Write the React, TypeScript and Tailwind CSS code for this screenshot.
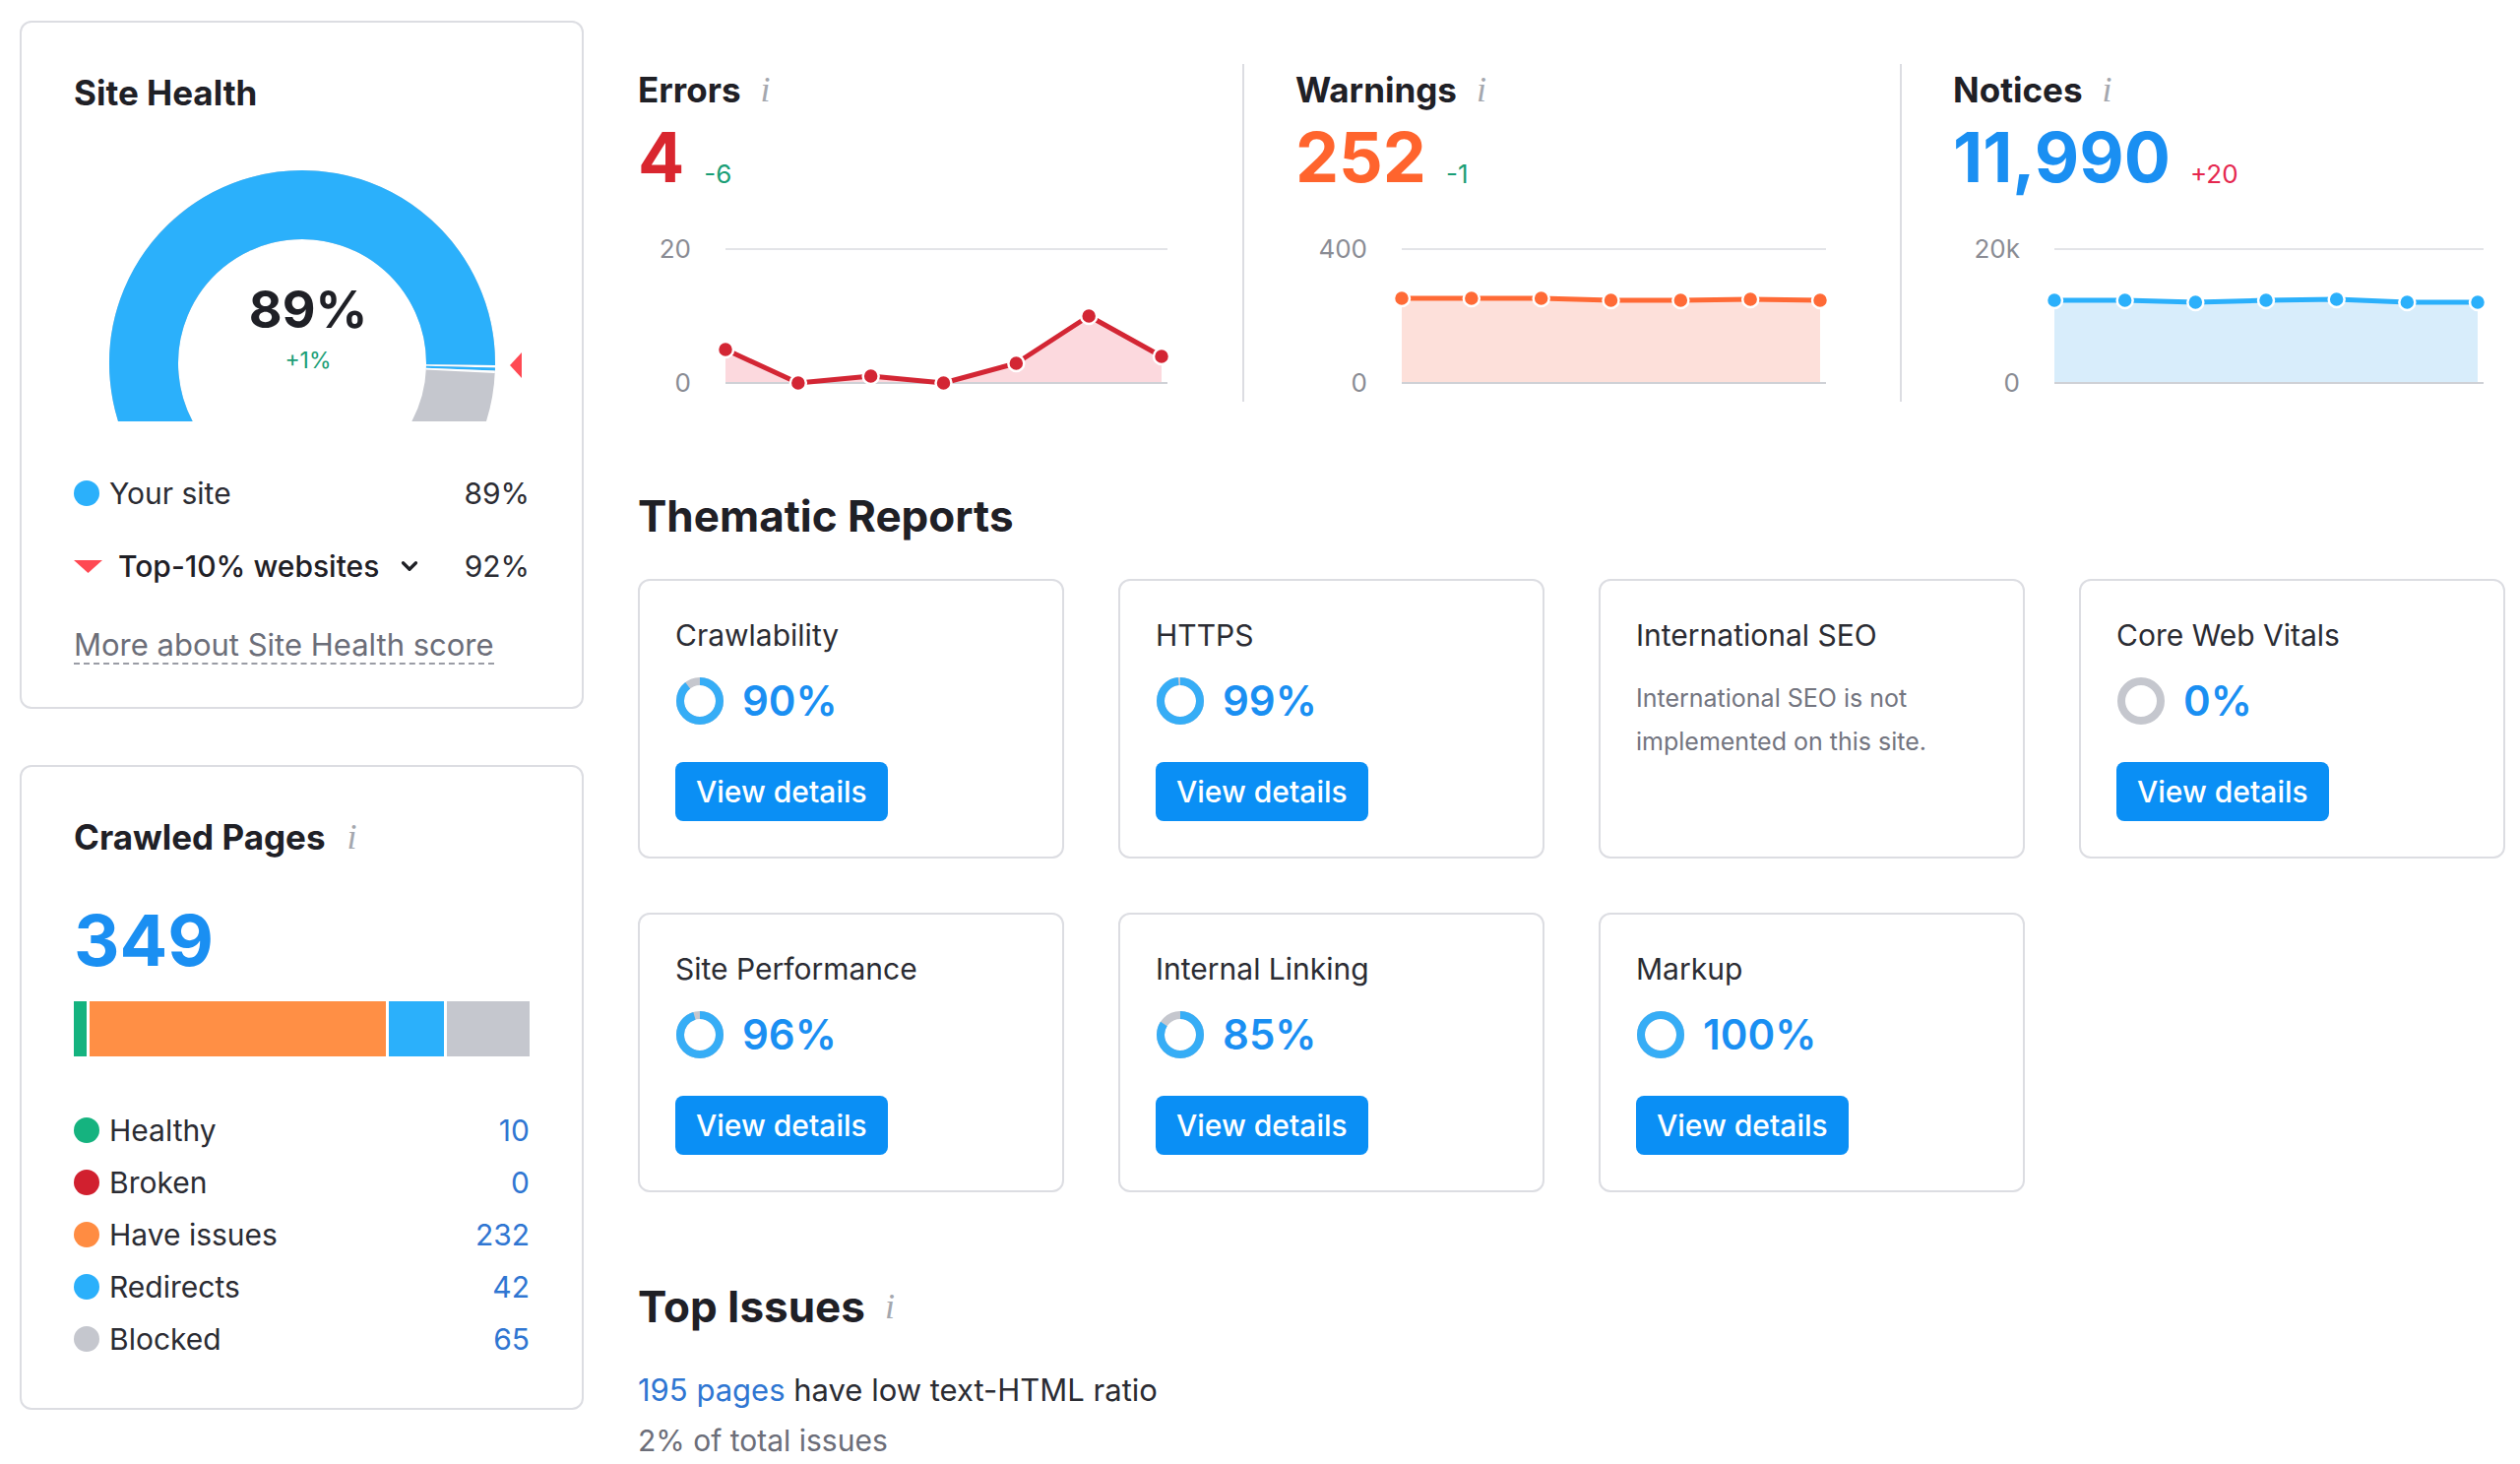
import React from "react";
import { ChevronDown } from "lucide-react";

const InfoI = ({ className = "" }: { className?: string }) => (
  <span
    className={
      "font-['Liberation_Serif',serif] italic text-[#a4a7ae] text-[36px] leading-none " +
      className
    }
  >
    i
  </span>
);

function polar(cx: number, cy: number, r: number, deg: number) {
  const a = (deg * Math.PI) / 180;
  return [cx + r * Math.cos(a), cy - r * Math.sin(a)];
}

function arcPath(cx: number, cy: number, r: number, from: number, to: number) {
  const [x1, y1] = polar(cx, cy, r, from);
  const [x2, y2] = polar(cx, cy, r, to);
  const large = from - to > 180 ? 1 : 0;
  return `M ${x1} ${y1} A ${r} ${r} 0 ${large} 1 ${x2} ${y2}`;
}

function Gauge() {
  const cx = 210;
  const cy = 200;
  const r = 161;
  const w = 70;
  return (
    <div className="relative w-[440px] h-[260px] ml-[22px]">
      <svg width="440" height="260" viewBox="0 0 440 260">
        <defs>
          <clipPath id="gclip">
            <rect x="0" y="0" width="440" height="259" />
          </clipPath>
        </defs>
        <g clipPath="url(#gclip)" fill="none">
          <path d={arcPath(cx, cy, r, 210, -30)} stroke="#c5c7ce" strokeWidth={w} />
          <path d={arcPath(cx, cy, r, 210, -0.6)} stroke="#2bb0fb" strokeWidth={w} />
          <path d={arcPath(cx, cy, r, -0.6, -1.3)} stroke="#ffffff" strokeWidth={w} />
          <path d={arcPath(cx, cy, r, -1.3, -2.2)} stroke="#2bb0fb" strokeWidth={w} />
          <path d={arcPath(cx, cy, r, -2.2, -2.9)} stroke="#ffffff" strokeWidth={w} />
        </g>
        <polygon points="421,202 433,189 433,215" fill="#ff4953" />
      </svg>
      <div className="absolute left-[0px] w-[432px] top-[116px] text-center text-[52px] leading-[60px] font-bold text-[#1f2026]">
        89%
      </div>
      <div className="absolute left-[0px] w-[432px] top-[183px] text-center text-[23px] leading-[28px] text-[#1a9e76]">
        +1%
      </div>
    </div>
  );
}

function Dot({ color }: { color: string }) {
  return <span className="inline-block w-[26px] h-[26px] rounded-full shrink-0" style={{ backgroundColor: color }} />;
}

function SiteHealthCard() {
  return (
    <div className="border-2 border-[#dcdde2] rounded-[12px] bg-white px-[53px] pt-[50px] pb-[42px]">
      <div className="text-[35px] leading-[42px] font-bold text-[#1f2026]">Site Health</div>
      <div className="mt-[54px]">
        <Gauge />
      </div>
      <div className="mt-[52px] flex items-center h-[40px] text-[30px] text-[#2b2c33]">
        <Dot color="#2bb0fb" />
        <span className="ml-[10px]">Your site</span>
        <span className="ml-auto">89%</span>
      </div>
      <div className="mt-[34px] flex items-center h-[40px] text-[30px] text-[#2b2c33]">
        <svg width="29" height="14" viewBox="0 0 29 14" className="shrink-0">
          <polygon points="0,1 29,1 14.5,14" fill="#ff4953" />
        </svg>
        <span className="ml-[16px] font-medium text-[#1f2026]">Top-10% websites</span>
        <ChevronDown className="ml-[18px] text-[#1f2026]" size={26} strokeWidth={3} />
        <span className="ml-auto">92%</span>
      </div>
      <div className="mt-[41px] h-[40px] flex items-center">
        <span className="text-[31px] text-[#6c6e79] leading-[36px] border-b-2 border-dashed border-[#9a9ca5]">
          More about Site Health score
        </span>
      </div>
    </div>
  );
}

const crawlRows = [
  { label: "Healthy", color: "#15b37f", value: "10" },
  { label: "Broken", color: "#d1202f", value: "0" },
  { label: "Have issues", color: "#ff8c42", value: "232" },
  { label: "Redirects", color: "#2bb0fb", value: "42" },
  { label: "Blocked", color: "#c5c7ce", value: "65" },
];

function CrawledPagesCard() {
  return (
    <div className="border-2 border-[#dcdde2] rounded-[12px] bg-white px-[53px] pt-[50px] pb-[50px]">
      <div className="flex items-center h-[42px]">
        <span className="text-[35px] leading-[42px] font-bold text-[#1f2026]">Crawled Pages</span>
        <InfoI className="ml-[22px]" />
      </div>
      <div className="mt-[46px] text-[72px] leading-[76px] font-bold text-[#1a8ff2]">349</div>
      <div className="mt-[24px] flex h-[56px] gap-[3px]">
        <div className="w-[13px] bg-[#15b37f]" />
        <div className="w-[301px] bg-[#ff8f45]" />
        <div className="w-[56px] bg-[#2bb0fb]" />
        <div className="flex-1 bg-[#c5c7ce]" />
      </div>
      <div className="mt-[55px] flex flex-col gap-[13px]">
        {crawlRows.map((r) => (
          <div key={r.label} className="flex items-center h-[40px] text-[30px]">
            <Dot color={r.color} />
            <span className="ml-[10px] text-[#2b2c33]">{r.label}</span>
            <span className="ml-auto text-[#2f76d2]">{r.value}</span>
          </div>
        ))}
      </div>
    </div>
  );
}

type ChartProps = {
  labels: [string, string];
  labelW: string;
  width: number;
  points: number[];
  line: string;
  fill: string;
};

function Chart({ labels, labelW, width, points, line, fill }: ChartProps) {
  const n = points.length;
  const span = width - 6;
  const xs = points.map((_, i) => (i * span) / (n - 1));
  const poly = points.map((y, i) => `${xs[i]},${y}`).join(" ");
  const area = `0,148 ${poly} ${xs[n - 1]},148`;
  return (
    <div className="flex mt-[43px]">
      <div className={"flex flex-col justify-between h-[160px] text-right text-[26px] leading-[24px] text-[#8a8c94] " + labelW}>
        <span>{labels[0]}</span>
        <span>{labels[1]}</span>
      </div>
      <svg width={width} height="160" className="ml-[35px] overflow-visible">
        <line x1="0" y1="12" x2={width} y2="12" stroke="#e3e4e8" strokeWidth="2" />
        <polygon points={area} fill={fill} />
        <line x1="0" y1="148" x2={width} y2="148" stroke="#cfd1d6" strokeWidth="2" />
        <polyline points={poly} fill="none" stroke={line} strokeWidth="5" strokeLinejoin="round" />
        {points.map((y, i) => (
          <circle key={i} cx={xs[i]} cy={y} r="8" fill={line} stroke="#fff" strokeWidth="2.5" />
        ))}
      </svg>
    </div>
  );
}

function Metric({
  title,
  value,
  valueColor,
  delta,
  deltaColor,
  chart,
}: {
  title: string;
  value: string;
  valueColor: string;
  delta: string;
  deltaColor: string;
  chart: ChartProps;
}) {
  return (
    <div>
      <div className="flex items-center h-[40px]">
        <span className="text-[35px] font-bold text-[#1f2026] leading-[40px]">{title}</span>
        <InfoI className="ml-[20px]" />
      </div>
      <div className="mt-[11px] flex items-end h-[76px]">
        <span className="text-[70px] leading-[76px] font-bold" style={{ color: valueColor }}>
          {value}
        </span>
        <span className="ml-[20px] mb-[6px] text-[26px] leading-[30px]" style={{ color: deltaColor }}>
          {delta}
        </span>
      </div>
      <Chart {...chart} />
    </div>
  );
}

function Ring({ pct }: { pct: number }) {
  const r = 20;
  const c = 2 * Math.PI * r;
  const blue = (c * pct) / 100;
  return (
    <svg width="50" height="50" viewBox="0 0 50 50" className="shrink-0">
      <circle cx="25" cy="25" r={r} fill="none" stroke="#c5c7ce" strokeWidth="8" />
      {pct > 0 && (
        <circle
          cx="25"
          cy="25"
          r={r}
          fill="none"
          stroke="#36adf6"
          strokeWidth="8"
          strokeDasharray={`${pct >= 100 ? c : blue - 1.5} ${c}`}
          transform="rotate(-90 25 25)"
        />
      )}
    </svg>
  );
}

function ReportCard({ title, pct, desc }: { title: string; pct?: number; desc?: string }) {
  return (
    <div className="h-[284px] border-2 border-[#dcdde2] rounded-[12px] bg-white px-[36px] pt-[37px]">
      <div className="text-[30px] leading-[36px] text-[#2b2c33]">{title}</div>
      {desc ? (
        <div className="mt-[24px] text-[25px] leading-[44px] text-[#73757f] w-[330px]">{desc}</div>
      ) : (
        <>
          <div className="mt-[24px] flex items-center h-[50px]">
            <Ring pct={pct ?? 0} />
            <span className="ml-[18px] text-[42px] leading-[50px] font-semibold text-[#1a8ff2]">{pct}%</span>
          </div>
          <button className="mt-[37px] h-[60px] px-[21px] rounded-[8px] bg-[#0a8ff5] text-white text-[30px] font-medium leading-[60px]">
            View details
          </button>
        </>
      )}
    </div>
  );
}

export default function App() {
  return (
    <div className="min-h-screen bg-white font-['Inter','Noto_Sans',sans-serif] text-[#1f2026]">
      <div className="flex pl-[20px] pt-[21px] pr-[18px] gap-[55px]">
        <div className="w-[573px] shrink-0 flex flex-col gap-[57px]">
          <SiteHealthCard />
          <CrawledPagesCard />
        </div>
        <div className="flex-1 min-w-0">
          <div className="mt-[44px] flex h-[343px]">
            <div className="w-[614px] shrink-0 pt-[6px]">
              <Metric
                title="Errors"
                value="4"
                valueColor="#d9262f"
                delta="-6"
                deltaColor="#1a9e76"
                chart={{
                  labels: ["20", "0"],
                  labelW: "w-[54px]",
                  width: 449,
                  points: [114, 148, 141, 148, 128, 80, 121],
                  line: "#d32634",
                  fill: "#fcd9de",
                }}
              />
            </div>
            <div className="w-[668px] shrink-0 border-l-2 border-[#dcdde2] pl-[52px] pt-[6px]">
              <Metric
                title="Warnings"
                value="252"
                valueColor="#ff642d"
                delta="-1"
                deltaColor="#1a9e76"
                chart={{
                  labels: ["400", "0"],
                  labelW: "w-[73px]",
                  width: 431,
                  points: [62, 62, 62, 64, 64, 63, 64],
                  line: "#ff6a36",
                  fill: "#fde0da",
                }}
              />
            </div>
            <div className="flex-1 border-l-2 border-[#dcdde2] pl-[52px] pt-[6px]">
              <Metric
                title="Notices"
                value="11,990"
                valueColor="#1a8ff2"
                delta="+20"
                deltaColor="#e5284f"
                chart={{
                  labels: ["20k", "0"],
                  labelW: "w-[68px]",
                  width: 436,
                  points: [64, 64, 66, 64, 63, 66, 66],
                  line: "#2bb0fb",
                  fill: "#d8edfb",
                }}
              />
            </div>
          </div>

          <div className="mt-[92px] text-[44px] leading-[48px] font-bold text-[#1f2026]">Thematic Reports</div>
          <div className="mt-[40px] grid grid-cols-[repeat(4,433px)] gap-[55px]">
            <ReportCard title="Crawlability" pct={90} />
            <ReportCard title="HTTPS" pct={99} />
            <ReportCard title="International SEO" desc="International SEO is not implemented on this site." />
            <ReportCard title="Core Web Vitals" pct={0} />
            <ReportCard title="Site Performance" pct={96} />
            <ReportCard title="Internal Linking" pct={85} />
            <ReportCard title="Markup" pct={100} />
          </div>

          <div className="mt-[92px] flex items-center h-[48px]">
            <span className="text-[44px] leading-[48px] font-bold text-[#1f2026]">Top Issues</span>
            <InfoI className="ml-[20px]" />
          </div>
          <div className="mt-[41px] text-[31px] leading-[40px] text-[#2b2c33]">
            <span className="text-[#2f76d2]">195 pages</span> have low text-HTML ratio
          </div>
          <div className="mt-[11px] text-[30px] leading-[40px] text-[#6c6e79]">2% of total issues</div>
        </div>
      </div>
    </div>
  );
}
